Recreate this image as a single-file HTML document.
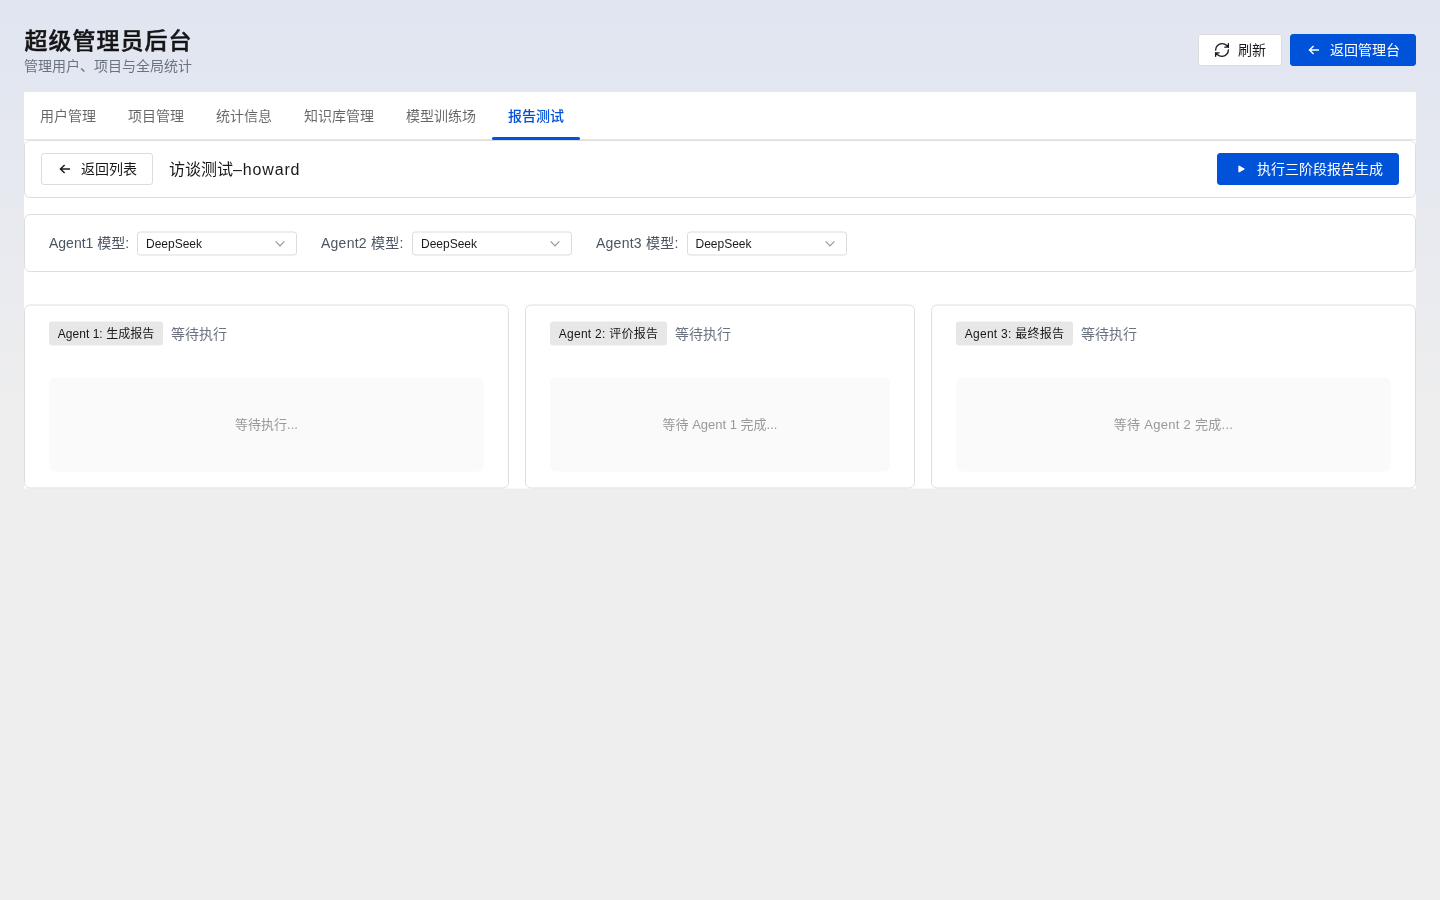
<!DOCTYPE html>
<html lang="zh-CN">
<head>
<meta charset="utf-8">
<title>超级管理员后台</title>
<style>
*{box-sizing:border-box;margin:0;padding:0}
html,body{width:1440px;height:900px;overflow:hidden}
body{font-family:"Liberation Sans","Noto Sans CJK SC",sans-serif;font-size:14px;color:rgba(0,0,0,.9);
  background:linear-gradient(180deg,#e0e5f1 0px,#eeeeee 420px,#eeeeee 900px);position:relative}
.abs{position:absolute}
.hdr-title{left:24.5px;top:25px;font-size:23px;letter-spacing:1px;font-weight:500;-webkit-text-stroke:.45px rgba(0,0,0,.9);line-height:32px;color:rgba(0,0,0,.9);white-space:nowrap}
.hdr-sub{left:24px;top:56px;font-size:14px;line-height:20px;color:#6b7280;white-space:nowrap}
.btn{display:inline-flex;align-items:center;justify-content:center;height:32px;border-radius:3px;font-size:14px;white-space:nowrap;padding:0 15px;border:1px solid #dcdcdc;background:#fff;color:rgba(0,0,0,.9)}
.btn .t{position:relative;top:-1px}
.btn svg{width:16px;height:16px;margin-right:8px;flex:none}
.btn.primary{background:#0052d9;border-color:#0052d9;color:#fff}
.panel{left:24px;top:92px;width:1392px;height:396px;background:#fff}
.tabs{left:0;top:0;width:1392px;height:48px;border-bottom:1px solid #e7e7e7;display:flex}
.tab{height:47px;line-height:49px;padding:0 16px;font-size:14px;color:rgba(0,0,0,.6);white-space:nowrap;position:relative}
.tab.on{color:#0052d9;font-weight:500}
.tab.on:after{content:"";position:absolute;left:0;right:0;bottom:-1px;height:3px;background:#0052d9;border-radius:2px}
.card{background:#fff;border:1px solid #dedede;border-radius:6px}
.lbl{font-size:14px;color:#4b5563;white-space:nowrap;line-height:24px;transform:translateY(-.5px)}
.sel{transform:translateY(.5px);width:160px;height:24px;border:1px solid #dcdcdc;border-radius:3px;background:#fff;font-size:12px;color:rgba(0,0,0,.9);display:flex;align-items:center;padding:0 8px;justify-content:space-between}
.sel svg{width:16px;height:16px;flex:none}
.tag{display:inline-flex;align-items:center;justify-content:center;height:24px;padding:0 0 4px;letter-spacing:.26px;border-radius:3px;background:#e7e7e7;font-size:12px;color:rgba(0,0,0,.9);white-space:nowrap}
.st{font-size:14px;color:#6b7280;margin-left:8px;white-space:nowrap;position:relative;top:-1px}
.box{background:#fafafa;border-radius:6px;padding-bottom:4px;display:flex;align-items:center;justify-content:center;font-size:13px;color:#999;white-space:nowrap}
</style>
</head>
<body>
<div id="root" style="position:absolute;left:0;top:0;width:1440px;height:900px;will-change:transform">
<div class="abs hdr-title">超级管理员后台</div>
<div class="abs hdr-sub">管理用户、项目与全局统计</div>

<div class="abs btn" style="left:1198px;top:34px;width:84px">
<svg viewBox="0.7 0.7 22.6 22.6" fill="none" stroke="currentColor" stroke-width="1.9" stroke-linecap="round" stroke-linejoin="round"><path d="M3 12a9 9 0 0 1 9-9 9.75 9.75 0 0 1 6.74 2.74L21 8M21 3v5h-5M21 12a9 9 0 0 1-9 9 9.75 9.75 0 0 1-6.74-2.74L3 16M8 16H3v5"/></svg><span class="t">刷新</span></div>
<div class="abs btn primary" style="left:1290px;top:34px;width:126px">
<svg viewBox="0 0 16 16" fill="none" stroke="currentColor" stroke-width="1.4" stroke-linecap="butt" stroke-linejoin="miter"><path d="M13 8H3.6M7.6 3.9L3.4 8l4.2 4.1"/></svg><span class="t">返回管理台</span></div>

<div class="abs" style="left:24px;top:488px;width:1392px;height:1px;background:rgba(255,255,255,.5)"></div>
<div class="abs panel">
  <div class="abs tabs">
    <div class="tab">用户管理</div><div class="tab">项目管理</div><div class="tab">统计信息</div><div class="tab">知识库管理</div><div class="tab">模型训练场</div><div class="tab on">报告测试</div>
  </div>

  <div class="abs card" style="left:0;top:48px;width:1392px;height:58px">
    <div class="abs btn" style="left:16px;top:12px;width:112px"><svg viewBox="0 0 16 16" fill="none" stroke="currentColor" stroke-width="1.4" stroke-linecap="butt" stroke-linejoin="miter"><path d="M13 8H3.6M7.6 3.9L3.4 8l4.2 4.1"/></svg><span class="t">返回列表</span></div>
    <div class="abs" style="left:144px;top:13px;line-height:32px;font-size:16px;font-weight:400;white-space:nowrap">访谈测试<span style="letter-spacing:.85px">–howard</span></div>
    <div class="abs btn primary" style="left:1192px;top:12px;width:182px"><svg viewBox="0 0 16 16" fill="currentColor" stroke="currentColor" stroke-width="1" stroke-linejoin="round"><path d="M5.9 4.9L11.3 8 5.9 11.1z"/></svg><span class="t">执行三阶段报告生成</span></div>
  </div>

  <div class="abs card" style="left:0;top:122px;width:1392px;height:58px">
    <span class="abs lbl" style="left:24px;top:16px">Agent1 模型:</span><div class="abs sel" style="left:112px;top:16px"><span>DeepSeek</span><svg viewBox="0 0 16 16" fill="none" stroke="#999" stroke-width="1.2" stroke-linecap="butt" stroke-linejoin="miter"><path d="M3.65 5.95L8 10.3 12.35 5.95"/></svg></div>
    <span class="abs lbl" style="left:296px;top:16px;letter-spacing:.25px">Agent2 模型:</span><div class="abs sel" style="left:387px;top:16px"><span>DeepSeek</span><svg viewBox="0 0 16 16" fill="none" stroke="#999" stroke-width="1.2" stroke-linecap="butt" stroke-linejoin="miter"><path d="M3.65 5.95L8 10.3 12.35 5.95"/></svg></div>
    <span class="abs lbl" style="left:571px;top:16px;letter-spacing:.25px">Agent3 模型:</span><div class="abs sel" style="left:661.5px;top:16px"><span>DeepSeek</span><svg viewBox="0 0 16 16" fill="none" stroke="#999" stroke-width="1.2" stroke-linecap="butt" stroke-linejoin="miter"><path d="M3.65 5.95L8 10.3 12.35 5.95"/></svg></div>
  </div>

  <div class="abs card" style="left:0;top:212px;width:485px;height:184px;transform:translateY(.5px)">
    <div class="abs" style="left:24px;top:16px;display:flex;align-items:center"><span class="tag" style="width:114px;letter-spacing:.05px">Agent 1: 生成报告</span><span class="st">等待执行</span></div>
    <div class="abs box" style="left:24px;top:72px;width:435px;height:94px">等待执行...</div>
  </div>
  <div class="abs card" style="left:501px;top:212px;width:390px;height:184px;transform:translateY(.5px)">
    <div class="abs" style="left:24px;top:16px;display:flex;align-items:center"><span class="tag" style="width:117px">Agent 2: 评价报告</span><span class="st">等待执行</span></div>
    <div class="abs box" style="left:24px;top:72px;width:340px;height:94px">等待 Agent 1 完成...</div>
  </div>
  <div class="abs card" style="left:907px;top:212px;width:485px;height:184px;transform:translateY(.5px)">
    <div class="abs" style="left:24px;top:16px;display:flex;align-items:center"><span class="tag" style="width:117px">Agent 3: 最终报告</span><span class="st">等待执行</span></div>
    <div class="abs box" style="left:24px;top:72px;width:435px;height:94px;letter-spacing:.28px">等待 Agent 2 完成...</div>
  </div>
</div>
</div>
</body>
</html>
